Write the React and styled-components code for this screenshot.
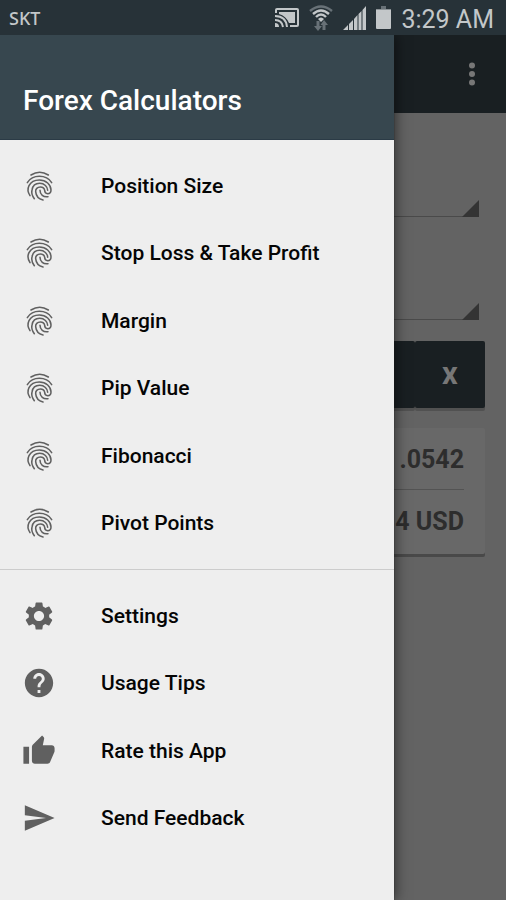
import React from "react";
import styled, { createGlobalStyle } from "styled-components";
import { MdSettings, MdHelp, MdThumbUp, MdSend } from "react-icons/md";

const GlobalStyle = createGlobalStyle`
  * { box-sizing: border-box; }
  body { margin: 0; background: #636363; font-family: Roboto, "Liberation Sans", sans-serif; }
  button, select { font: inherit; border: 0; border-radius: 0; padding: 0; background: none; color: inherit; }
`;

const Screen = styled.div`
  display: flex;
  flex-direction: column;
  min-height: 100vh;
`;

const StatusBar = styled.header`
  display: flex;
  align-items: center;
  justify-content: space-between;
  height: 35px;
  padding: 0 12px 0 9px;
  background: #273238;
  color: #c3c7c9;
`;

const Carrier = styled.span`
  font: 500 18px/24px "Noto Sans", sans-serif;
`;

const StatusIcons = styled.div`
  display: flex;
  align-items: center;
  gap: 10px;
  svg { display: block; }
`;

const Clock = styled.time`
  font-size: 25px;
  line-height: 35px;
  padding-top: 3px;
`;

const Stage = styled.div`
  position: relative;
  display: flex;
  flex-direction: column;
  flex: 1;
`;

const Toolbar = styled.div`
  display: flex;
  align-items: center;
  justify-content: flex-end;
  height: 78px;
  padding-right: 22px;
  background: #191f22;
`;

const OverflowButton = styled.button`
  display: flex;
  align-items: center;
  justify-content: center;
  width: 24px;
  height: 48px;
  color: #777777;
`;

const Content = styled.main`
  flex: 1;
  display: flex;
  flex-direction: column;
  padding: 62px 21px 0;
`;

const Spinner = styled.label`
  position: relative;
  display: block;
  height: 42px;
  margin: 0 6px 61px 0;
  border-bottom: 1px solid #4a4a4a;
  &:last-of-type { margin-bottom: 21px; }
  &::after {
    content: "";
    position: absolute;
    right: 0;
    bottom: -1px;
    width: 17px;
    height: 17px;
    background: #343434;
    clip-path: polygon(100% 0, 100% 100%, 0 100%);
    pointer-events: none;
  }
  select { appearance: none; width: 100%; height: 100%; }
`;

const KeyRow = styled.div`
  display: grid;
  grid-template-columns: 1fr 70px;
  border-radius: 2px;
`;

const Key = styled.button`
  height: 67px;
  border-radius: 2px;
  background: #191f22;
  box-shadow: 0 3px 0 #515151;
  color: #777777;
  font-size: 24px;
  font-weight: 900;
  line-height: 71px;
`;

const ResultCard = styled.section`
  margin-top: 20px;
  padding: 0 21px;
  border-radius: 2px;
  background: #686868;
  box-shadow: 0 3px 0 #494949;
`;

const Result = styled.output`
  display: block;
  height: 61px;
  line-height: 64px;
  font-size: 25px;
  font-weight: 700;
  text-align: right;
  color: #2d2d2d;
  & + & { height: 65px; border-top: 1px solid #535353; }
`;

const Drawer = styled.nav`
  position: absolute;
  inset: 0 auto 0 0;
  width: calc(100% - 112px);
  background: #eeeeee;
  box-shadow: 0 0 1px #222222, 2px 0 12px rgba(0, 0, 0, 0.5);
  clip-path: inset(0 -24px 0 0);
`;

const DrawerHeader = styled.div`
  display: flex;
  align-items: flex-end;
  height: 105px;
  padding: 0 23px 22px;
  background: #37474f;
  border-bottom: 1px solid #2b3b46;
`;

const DrawerTitle = styled.h1`
  margin: 0;
  color: #ffffff;
  font-size: 28px;
  line-height: 32px;
  font-weight: 500;
`;

const Menu = styled.ul`
  display: grid;
  grid-auto-rows: 1fr;
  height: ${({ $height }) => $height}px;
  margin: 12px 0;
  padding: 0;
  list-style: none;
`;

const Divider = styled.hr`
  margin: 0;
  border: 0;
  border-top: 1px solid #cccccc;
`;

const MenuItem = styled.button`
  display: flex;
  align-items: center;
  gap: 45px;
  width: 100%;
  height: 100%;
  padding: 0 22px;
  font-size: 21px;
  line-height: 28px;
  font-weight: 500;
  text-align: left;
  color: #050505;
  svg { flex: none; width: 34px; height: 34px; color: #606060; }
`;

const FingerprintIcon = () => (
  <svg viewBox="36 24 102 102" fill="none" stroke="currentColor" strokeWidth="4.600" strokeLinecap="round">
    <path d="M63 42Q89 26 115 42" />
    <path d="M52 65Q64 46 88 46Q113 46 125 65" />
    <path d="M60 104C54 95 52 84 57 74C63 62 75 57 88 57C108 57 123 71 123 87C123 94 119 98 113 98C107 98 104 93 104 88C103 82 98 78 91 78C82 78 76 84 77 92C78 104 86 114 99 117" />
    <path d="M73 113C66 104 64 95 66 87C68 75 77 67 89 67C103 67 113 77 113 88" />
    <path d="M90 88C90 101 100 109 114 107" />
  </svg>
);

const calculators = ["Position Size", "Stop Loss & Take Profit", "Margin", "Pip Value", "Fibonacci", "Pivot Points"];
const links = [
  ["Settings", MdSettings],
  ["Usage Tips", MdHelp],
  ["Rate this App", MdThumbUp],
  ["Send Feedback", MdSend],
];

const CastIcon = () => (
  <svg width="24" height="20" viewBox="0 0 24 20" fill="none" stroke="currentColor" strokeWidth="2">
    <path d="M1 5V2Q1 1 2 1H22Q23 1 23 2V17Q23 18 22 18H15" />
    <path d="M4 4H20V15H14Q11 8 4 6Z" fill="currentColor" stroke="none" />
    <path d="M0 8Q11 8 12 19M0 12Q7 12 8 19" />
    <path d="M0 15Q4 15 4 19H0Z" fill="currentColor" stroke="none" />
  </svg>
);

const WifiIcon = () => (
  <svg width="24" height="26" viewBox="0 0 24 26" fill="none" stroke="currentColor" strokeWidth="2.400">
    <path d="M1 6Q12 -3 23 6" stroke="#687177" />
    <path d="M4 9Q12 2 20 9M7 12Q12 7 17 12" />
    <path d="M9 14Q12 11 15 14L12 17Z" fill="currentColor" stroke="none" />
    <path d="M7.500 16H10.500V21H13L9 26L5 21H7.500ZM13.500 25V20H11.500L15 15L19 20H16.500V25Z" fill="#687177" stroke="none" />
  </svg>
);

const SignalIcon = () => (
  <svg width="23" height="24" viewBox="0 0 23 24" fill="currentColor">
    <path d="M0 24L5 19V24ZM6 18L10 14V24H6ZM11 13L14.500 9V24H11ZM15.500 8L18.500 5V24H15.500ZM19.500 4L23 0V24H19.500Z" />
  </svg>
);

const BatteryIcon = () => (
  <svg width="15" height="23" viewBox="0 0 15 23">
    <rect x="5" width="5" height="3" fill="#687177" />
    <rect y="3" width="15" height="20" rx="1" fill="currentColor" />
    <rect width="15" height="1" y="3" fill="#8b9296" />
  </svg>
);

export default function App() {
  return (
    <Screen>
      <GlobalStyle />
      <StatusBar>
        <Carrier>SKT</Carrier>
        <StatusIcons>
          <CastIcon />
          <WifiIcon />
          <SignalIcon />
          <BatteryIcon />
          <Clock>3:29 AM</Clock>
        </StatusIcons>
      </StatusBar>
      <Stage>
        <Toolbar>
          <OverflowButton aria-label="More options">
            <svg width="6" height="24" viewBox="0 0 6 24" fill="currentColor">
              <circle cx="3" cy="3.500" r="3" />
              <circle cx="3" cy="12" r="3" />
              <circle cx="3" cy="20.500" r="3" />
            </svg>
          </OverflowButton>
        </Toolbar>
        <Content>
          <Spinner><select aria-label="Account currency" /></Spinner>
          <Spinner><select aria-label="Currency pair" /></Spinner>
          <KeyRow>
            <Key aria-label="Calculate" />
            <Key>X</Key>
          </KeyRow>
          <ResultCard>
            <Result>.0542</Result>
            <Result>4 USD</Result>
          </ResultCard>
        </Content>
        <Drawer>
          <DrawerHeader>
            <DrawerTitle>Forex Calculators</DrawerTitle>
          </DrawerHeader>
          <Menu $height={405}>
            {calculators.map((label) => (
              <li key={label}><MenuItem><FingerprintIcon />{label}</MenuItem></li>
            ))}
          </Menu>
          <Divider />
          <Menu $height={270}>
            {links.map(([label, Icon]) => (
              <li key={label}><MenuItem><Icon />{label}</MenuItem></li>
            ))}
          </Menu>
        </Drawer>
      </Stage>
    </Screen>
  );
}
